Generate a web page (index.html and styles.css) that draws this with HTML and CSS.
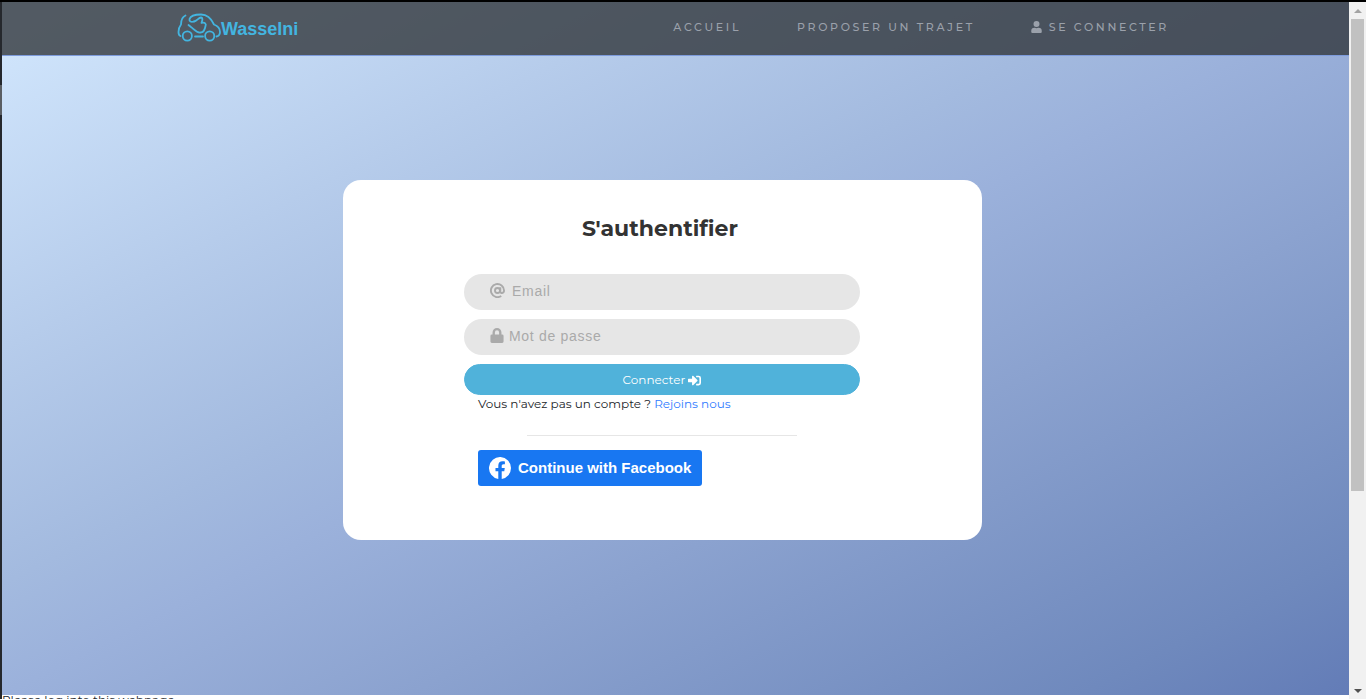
FILE: index.html
```html
<!DOCTYPE html>
<html lang="fr">
<head>
<meta charset="utf-8">
<title>Wasselni - S'authentifier</title>
<link rel="stylesheet" href="styles.css">
</head>
<body>
<div class="edge"><span class="edge-mark"></span></div>
<div class="page">
  <div class="hero">
    <header class="navbar">
      <a class="brand" href="#">
        <svg class="brand-car" viewBox="0 0 44 30" fill="none" stroke="currentColor" stroke-width="1.8" stroke-linecap="round" stroke-linejoin="round">
          <path d="M8.500 2.500C5 4 4 7 4 11.500C2 14 1.500 16 1.500 19C1.500 21 2 22.500 3.500 23"/>
          <circle cx="10.300" cy="23" r="4.600"/>
          <circle cx="32.700" cy="23" r="4.600"/>
          <path d="M18 23.500H26"/>
          <path d="M17 8.500C14 9.500 12 8.500 12.500 6C13.500 2.500 18 1.500 24 1.500C30 1.500 34 5 37 11.500C41 13 43 16 43 19C43 21.500 42 23 39.500 23.500"/>
          <path d="M17 8.500C20 8 21.500 4.500 24 4.500C26.500 5 25 8 24.500 10C28 9 29.500 11 28.500 13C28 16 26.500 19.500 23.500 19.500C19 20 17 16 14 14L11.500 12"/>
        </svg>
        <span class="brand-name">Wasselni</span>
      </a>
      <nav class="menu">
        <a href="#">ACCUEIL</a>
        <a href="#">PROPOSER UN TRAJET</a>
        <a href="#"><svg class="user-icon" viewBox="0 0 448 512" fill="currentColor"><path d="M224 256a128 128 0 1 0 0-256 128 128 0 0 0 0 256zm90 32h-17a174 174 0 0 1-146 0h-17A134 134 0 0 0 0 422v42a48 48 0 0 0 48 48h352a48 48 0 0 0 48-48v-42a134 134 0 0 0-134-134z"/></svg>SE CONNECTER</a>
      </nav>
    </header>
    <main class="stage">
      <section class="card">
        <h1 class="title">S'authentifier</h1>
        <form class="form">
          <div class="field">
            <label for="email" aria-label="Email"><svg class="at-icon" viewBox="0 0 16 16" fill="none" stroke="currentColor" stroke-width="2"><circle cx="8" cy="8" r="2.700"/><path d="M11 4.500V9C11 11.500 15 11.300 15 8A7 7 0 1 0 12 13.800"/></svg></label>
            <input id="email" type="email" placeholder="Email">
          </div>
          <div class="field">
            <label for="password" aria-label="Mot de passe"><svg class="lock-icon" viewBox="0 0 448 512" fill="currentColor"><path d="M400 224h-24v-72a152 152 0 0 0-304 0v72H48a48 48 0 0 0-48 48v192a48 48 0 0 0 48 48h352a48 48 0 0 0 48-48V272a48 48 0 0 0-48-48zm-104 0H152v-72a72 72 0 0 1 144 0z"/></svg></label>
            <input id="password" type="password" placeholder="Mot de passe">
          </div>
          <button class="submit" type="submit">Connecter <svg class="enter-icon" viewBox="0 0 512 512" fill="currentColor"><path d="M416 448h-84a12 12 0 0 1-12-12v-40a12 12 0 0 1 12-12h84a32 32 0 0 0 32-32V160a32 32 0 0 0-32-32h-84a12 12 0 0 1-12-12V76a12 12 0 0 1 12-12h84a96 96 0 0 1 96 96v192a96 96 0 0 1-96 96zm-47-209L201 71c-15-15-41-4-41 17v96H24a24 24 0 0 0-24 24v96a24 24 0 0 0 24 24h136v96c0 21 26 32 41 17l168-168a24 24 0 0 0 0-34z"/></svg></button>
          <p class="signup">Vous n'avez pas un compte ? <a href="#">Rejoins nous</a></p>
          <hr class="rule">
          <button class="facebook" type="button"><svg class="fb-icon" viewBox="0 0 24 24"><path fill="#fff" d="M24 12.070A12 12 0 1 0 10.130 23.930V15.540H7.080v-3.470h3.050V9.430c0-3.010 1.790-4.670 4.530-4.670 1.310 0 2.680.230 2.680.230v2.950h-1.510c-1.490 0-1.960.930-1.960 1.880v2.250h3.330l-.530 3.470h-2.800v8.390A12 12 0 0 0 24 12.070z"/></svg>Continue with Facebook</button>
        </form>
      </section>
    </main>
  </div>
  <p class="status">Please log into this webpage.</p>
</div>
<div class="scrollbar">
  <svg class="arrow arrow-up" viewBox="0 0 8 4"><path d="M0 4L4 0L8 4Z"/></svg>
  <div class="thumb"></div>
  <svg class="arrow arrow-down" viewBox="0 0 8 4"><path d="M0 0L4 4L8 0Z"/></svg>
</div>
</body>
</html>
```
FILE: styles.css
```css
* { box-sizing: border-box; }
body {
  margin: 0;
  height: 100vh;
  display: flex;
  overflow: hidden;
  border-top: 2px solid #000;
  background: #fff;
  font-family: Montserrat, Inter, sans-serif;
  font-size: 12px;
  color: #212529;
}
.edge { width: 2px; background: #25282d; padding-top: 83px; }
.edge-mark { display: block; height: 30px; background: #5a5e63; }
.page { flex: 1; min-width: 0; display: flex; flex-direction: column; }
.hero {
  flex: 1;
  display: flex;
  flex-direction: column;
  background: linear-gradient(to bottom right, #d3e8fe, #b6cceb 25%, #a3badf 42%, #9bb1db 50%, #8ba2cf 65%, #6f89bd 90%, #637cb7);
}
.navbar {
  height: 54px;
  padding: 0 180px 4px 175px;
  display: flex;
  align-items: center;
  justify-content: space-between;
  background: rgba(50, 55, 60, .8);
  border-bottom: 1px solid #7d9bdc;
}
.brand { display: flex; align-items: center; padding-top: 3px; color: #43b5e0; text-decoration: none; }
.brand-car { width: 44px; height: 30px; }
.brand-name { padding-top: 3px; font: bold 18px "Liberation Sans", Arial, sans-serif; }
.menu { display: flex; gap: 56px; }
.menu a {
  color: #9ba1ab;
  font-size: 11px;
  font-weight: 500;
  letter-spacing: .24em;
  text-decoration: none;
}
.user-icon { width: 11px; height: 12px; margin-right: 7px; vertical-align: -2px; }
.stage { flex: 1; display: flex; align-items: center; justify-content: center; padding: 0 26px 32px 0; }
.card {
  width: 639px;
  min-height: 360px;
  padding: 33px 122px 54px 121px;
  border-radius: 18px;
  background: #fff;
}
.title { margin: 0 4px 30px 0; font-size: 22px; line-height: 31px; font-weight: 700; text-align: center; color: #333; }
.form { display: flex; flex-direction: column; }
.field {
  height: 36px;
  margin-bottom: 9px;
  padding: 0 26px 2px;
  display: flex;
  align-items: center;
  border-radius: 18px;
  background: #e6e6e6;
  color: #aaa;
}
.field label { display: flex; }
.field input {
  flex: 1;
  border: 0;
  outline: 0;
  padding: 0;
  background: none;
  font: 14px "Liberation Sans", Arial, sans-serif;
  letter-spacing: .05em;
}
.field input::placeholder { color: #aaa; }
.at-icon { width: 15px; height: 15px; margin-right: 7px; }
.lock-icon { width: 14px; height: 15px; margin-right: 5px; }
.submit {
  height: 31px;
  border: 1px solid #50b2da;
  border-radius: 16px;
  background: #50b2da;
  color: #fff;
  font-family: inherit;
  font-size: 12px;
}
.enter-icon { width: 13px; height: 13px; vertical-align: -3px; }
.signup { margin: 0 14px; line-height: 18px; }
.signup a { color: #2f7bff; text-decoration: none; }
.rule { width: 270px; margin: 22px auto 14px; border: 0; border-top: 1px solid #e6e6e6; }
.facebook {
  align-self: flex-start;
  height: 36px;
  margin-left: 14px;
  padding: 0 11px;
  display: flex;
  align-items: center;
  gap: 7px;
  border: 0;
  border-radius: 3px;
  background: #1877f2;
  color: #fff;
  font: bold 15px "Liberation Sans", Arial, sans-serif;
}
.fb-icon { width: 22px; height: 22px; }
.status { height: 4px; margin: 0; line-height: 10px; }
.scrollbar {
  width: 17px;
  padding: 7px 2px 6px;
  display: flex;
  flex-direction: column;
  align-items: center;
  background: #f1f1f1;
}
.arrow { width: 8px; height: 4px; }
.arrow-up { fill: #a3a3a3; }
.arrow-down { fill: #505050; margin-top: auto; }
.thumb { width: 13px; height: 69%; margin-top: 6px; background: #c1c1c1; }
```
